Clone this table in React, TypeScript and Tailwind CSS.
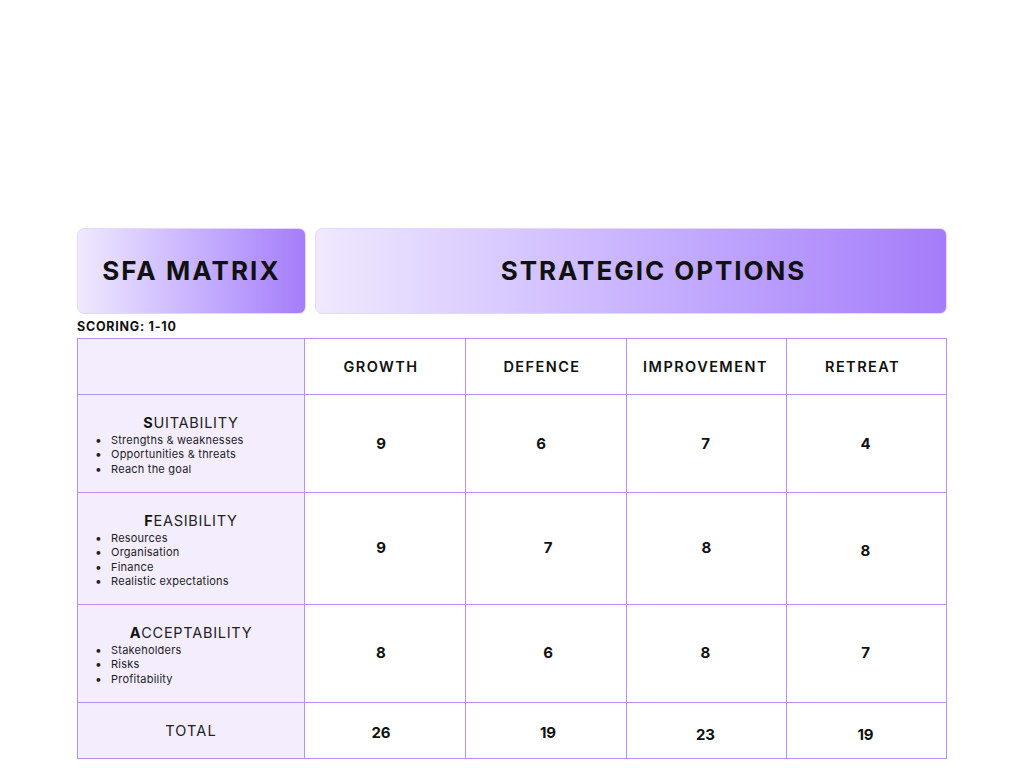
const font = { fontFamily: "Inter, 'Noto Sans', sans-serif" };

// small per-column nudges so the labels sit where the reference puts them
const options = [
  { label: "GROWTH", nudge: "pr-[8px]" },
  { label: "DEFENCE", nudge: "pr-[8px]" },
  { label: "IMPROVEMENT", nudge: "pr-[2px]" },
  { label: "RETREAT", nudge: "pr-[8px]" },
];

const criteria = [
  {
    first: "S",
    rest: "UITABILITY",
    points: ["Strengths & weaknesses", "Opportunities & threats", "Reach the goal"],
    scores: [
      { v: 9, c: "pr-[8px] pt-[2px]" },
      { v: 6, c: "pr-[10px] pt-[2px]" },
      { v: 7, c: "pr-[2px] pt-[2px]" },
      { v: 4, c: "pr-[2px] pt-[2px]" },
    ],
  },
  {
    first: "F",
    rest: "EASIBILITY",
    points: ["Resources", "Organisation", "Finance", "Realistic expectations"],
    scores: [
      { v: 9, c: "pr-[8px]" },
      { v: 7, c: "pl-[4px]" },
      { v: 8, c: "" },
      { v: 8, c: "pr-[2px] pt-[6px]" },
    ],
  },
  {
    first: "A",
    rest: "CCEPTABILITY",
    points: ["Stakeholders", "Risks", "Profitability"],
    scores: [
      { v: 8, c: "pr-[8px]" },
      { v: 6, c: "pl-[4px]" },
      { v: 8, c: "pr-[2px]" },
      { v: 7, c: "pr-[2px]" },
    ],
  },
];

const totals = [
  { v: 26, c: "pr-[8px] pt-[5px]" },
  { v: 19, c: "pl-[4px] pt-[5px]" },
  { v: 23, c: "pr-[2px] pt-[9px]" },
  { v: 19, c: "pr-[2px] pt-[9px]" },
];

export default function App() {
  return (
    <div className="w-[1024px] h-[768px] bg-white overflow-hidden text-[#111]" style={font}>
      <div className="pt-[228px] pl-[77px] w-[947px]">
        {/* title boxes */}
        <div className="flex gap-[9px] h-[86px]">
          <div className="w-[229px] rounded-[7px] border border-[#e4d8fd] bg-gradient-to-r from-[#f0e9fe] to-[#a57cfa] flex items-center justify-center">
            <span className="text-[26px] font-bold tracking-[0.08em] leading-none">SFA MATRIX</span>
          </div>
          <div className="flex-1 rounded-[7px] border border-[#e4d8fd] bg-gradient-to-r from-[#f0e9fe] to-[#a57cfa] flex items-center justify-center pl-[45px]">
            <span className="text-[26px] font-bold tracking-[0.075em] leading-none">STRATEGIC OPTIONS</span>
          </div>
        </div>

        <div className="mt-[3px] h-[21px] text-[12.5px] font-bold tracking-[0.06em] leading-[20px]">SCORING: 1-10</div>

        {/* matrix */}
        <div className="grid grid-cols-[226px_160px_160px_159px_159px] grid-rows-[55px_97px_111px_97px_55px] gap-px p-px bg-[#b890fb] w-[870px]">
          <div className="bg-[#f4edfe]" />
          {options.map((o) => (
            <div key={o.label} className={`bg-white flex items-center justify-center pt-[1px] text-[14.5px] font-semibold tracking-[0.1em] ${o.nudge}`}>
              {o.label}
            </div>
          ))}

          {criteria.map((c) => (
            <>
              <div key={c.first} className="bg-[#f4edfe] flex flex-col justify-center pl-[17px] pt-[3px]">
                <div className="text-center -ml-[17px] text-[14.5px] tracking-[0.05em] leading-[18px] text-[#222]">
                  <span className="font-bold text-[#111]">{c.first}</span>
                  {c.rest}
                </div>
                <ul className="mt-[1px]">
                  {c.points.map((p) => (
                    <li key={p} className="flex items-center text-[11px] leading-[14.3px] tracking-[0.02em] text-[#222]">
                      <span className="w-[16px] text-[12px] leading-none">•</span>
                      {p}
                    </li>
                  ))}
                </ul>
              </div>
              {c.scores.map((s, i) => (
                <div key={c.first + i} className={`bg-white flex items-center justify-center text-[15px] font-bold ${s.c}`}>
                  {s.v}
                </div>
              ))}
            </>
          ))}

          <div className="bg-[#f4edfe] flex items-center justify-center text-[14.5px] tracking-[0.08em] text-[#222]">
            TOTAL
          </div>
          {totals.map((t, i) => (
            <div key={i} className={`bg-white flex items-center justify-center text-[15px] font-bold ${t.c}`}>
              {t.v}
            </div>
          ))}
        </div>
      </div>
    </div>
  );
}
